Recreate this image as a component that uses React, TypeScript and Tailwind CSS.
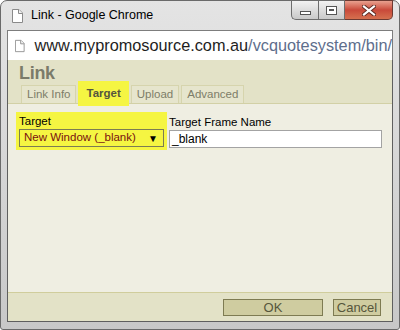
import React from 'react';

function PageIcon({ className }: { className?: string }) {
    return (
        <svg className={className} width="11" height="14" viewBox="0 0 11 14" fill="none">
            <path d="M0.5 0.5h6.5l3.5 3.5v9.5h-10z" fill="#fff" stroke="#8a8a8a" />
            <path d="M6.5 0.5v4h4" stroke="#8a8a8a" fill="#f0f0f0" />
        </svg>
    );
}

function WindowButtons() {
    return (
        <div className="ml-auto flex self-start -mt-px">
            <div className="w-[27px] h-[20px] border border-[#6d6d6d] border-r-0 rounded-bl-[5px] bg-gradient-to-b from-[#f2f2f2] to-[#c9c9c9] flex items-center justify-center">
                <div className="w-[11px] h-[4px] bg-white border border-[#555] mt-[5px]" />
            </div>
            <div className="w-[27px] h-[20px] border border-[#6d6d6d] bg-gradient-to-b from-[#f2f2f2] to-[#c9c9c9] flex items-center justify-center">
                <div className="w-[11px] h-[9px] bg-white border border-[#555] flex items-center justify-center">
                    <div className="w-[5px] h-[2px] border border-[#555]" />
                </div>
            </div>
            <div className="w-[48px] h-[20px] border border-[#6d3a32] border-l-0 rounded-br-[5px] bg-gradient-to-b from-[#e8a08f] via-[#c9493a] to-[#d5704f] flex items-center justify-center">
                <svg width="14" height="11" viewBox="0 0 14 11">
                    <path d="M2 1.5l10 8M12 1.5l-10 8" stroke="#5a2a22" strokeWidth="4" strokeLinecap="square" />
                    <path d="M2 1.5l10 8M12 1.5l-10 8" stroke="#fff" strokeWidth="2.2" strokeLinecap="square" />
                </svg>
            </div>
        </div>
    );
}

const TABS = ['Link Info', 'Target', 'Upload', 'Advanced'];

export default function App() {
    return (
        <div className="w-[400px] h-[330px] bg-white font-['Liberation_Sans',Arial,sans-serif]">
            <div className="h-full rounded-t-[7px] rounded-b-[3px] border border-[#6a6a6a] bg-gradient-to-b from-[#e4e4e4] via-[#d6d6d6] to-[#c8c8c8] flex flex-col px-[6px] pb-[7px]">
                {/* Title bar */}
                <div className="h-[29px] flex items-center shrink-0">
                    <PageIcon className="ml-[5px]" />
                    <span className="ml-[8px] text-[12.5px] text-black">Link - Google Chrome</span>
                    <WindowButtons />
                </div>

                {/* Address bar */}
                <div className="h-[30px] shrink-0 bg-white border-t border-l border-r border-[#7d7d7d] flex items-center overflow-hidden">
                    <PageIcon className="ml-[7px]" />
                    <span className="ml-[10px] text-[16.3px] leading-none whitespace-nowrap">
                        <span className="text-[#1e1e1e]">www.mypromosource.com.au</span>
                        <span className="text-[#5e6e8c]">/vcquotesystem/bin/</span>
                    </span>
                </div>

                {/* Dialog */}
                <div className="flex-1 flex flex-col border-l border-r border-b border-[#5f5f5f] bg-[#efeee2]">
                    <div className="bg-[#e3e2c7] shrink-0">
                        <div className="h-[24px] pl-[11px] pt-[2px] text-[18px] tracking-[-0.3px] font-bold text-[#7b7b6a] leading-[22px]">Link</div>
                        <div className="h-[20px] flex items-end gap-[2px] pl-[13px] border-b border-[#d2d0a6]">
                            {TABS.map((t) =>
                                t === 'Target' ? (
                                    <div
                                        key={t}
                                        className="h-[25px] -mb-[3px] px-[8px] bg-[#f5f542] flex items-center text-[11.5px] font-bold text-[#55553e]"
                                    >
                                        {t}
                                    </div>
                                ) : (
                                    <div
                                        key={t}
                                        className="h-[18px] px-[5px] border border-b-0 border-[#d6d4ad] bg-[#e6e5cd] flex items-center text-[11.5px] text-[#7d7d68]"
                                    >
                                        {t}
                                    </div>
                                )
                            )}
                        </div>
                    </div>

                    {/* Body */}
                    <div className="flex-1 flex items-start gap-[2px] pl-[8px] pt-[8px]">
                        <div className="w-[151px] h-[38px] bg-[#f5f542] px-[3px] pt-[3px]">
                            <div className="text-[11.5px] leading-[13px] text-black">Target</div>
                            <div className="mt-[1px] h-[18px] border border-[#7c7c52] flex items-center justify-between pl-[4px] pr-[5px] whitespace-nowrap">
                                <span className="text-[11.5px] text-[#7a1010]">New Window (_blank)</span>
                                <span className="text-[10px] text-black">▼</span>
                            </div>
                        </div>
                        <div className="pt-[4px] w-[213px]">
                            <div className="text-[11.5px] leading-[13px] text-black">Target Frame Name</div>
                            <div className="mt-[1px] h-[18px] bg-white border border-[#a3a3a3] flex items-center pl-[2px]">
                                <span className="text-[12px] text-black">_blank</span>
                            </div>
                        </div>
                    </div>

                    {/* Footer */}
                    <div className="h-[29px] shrink-0 border-t border-[#d0cd9c] bg-[#e3e2c7] flex items-start justify-end gap-[10px] pr-[11px] pt-[6px]">
                        <button className="w-[100px] h-[17px] bg-[#cfcca0] border border-[#7e7b52] text-[13px] text-[#56563c] leading-none">OK</button>
                        <button className="w-[48px] h-[17px] bg-[#cfcca0] border border-[#7e7b52] text-[13px] text-[#56563c] leading-none">Cancel</button>
                    </div>
                </div>
            </div>
        </div>
    );
}
